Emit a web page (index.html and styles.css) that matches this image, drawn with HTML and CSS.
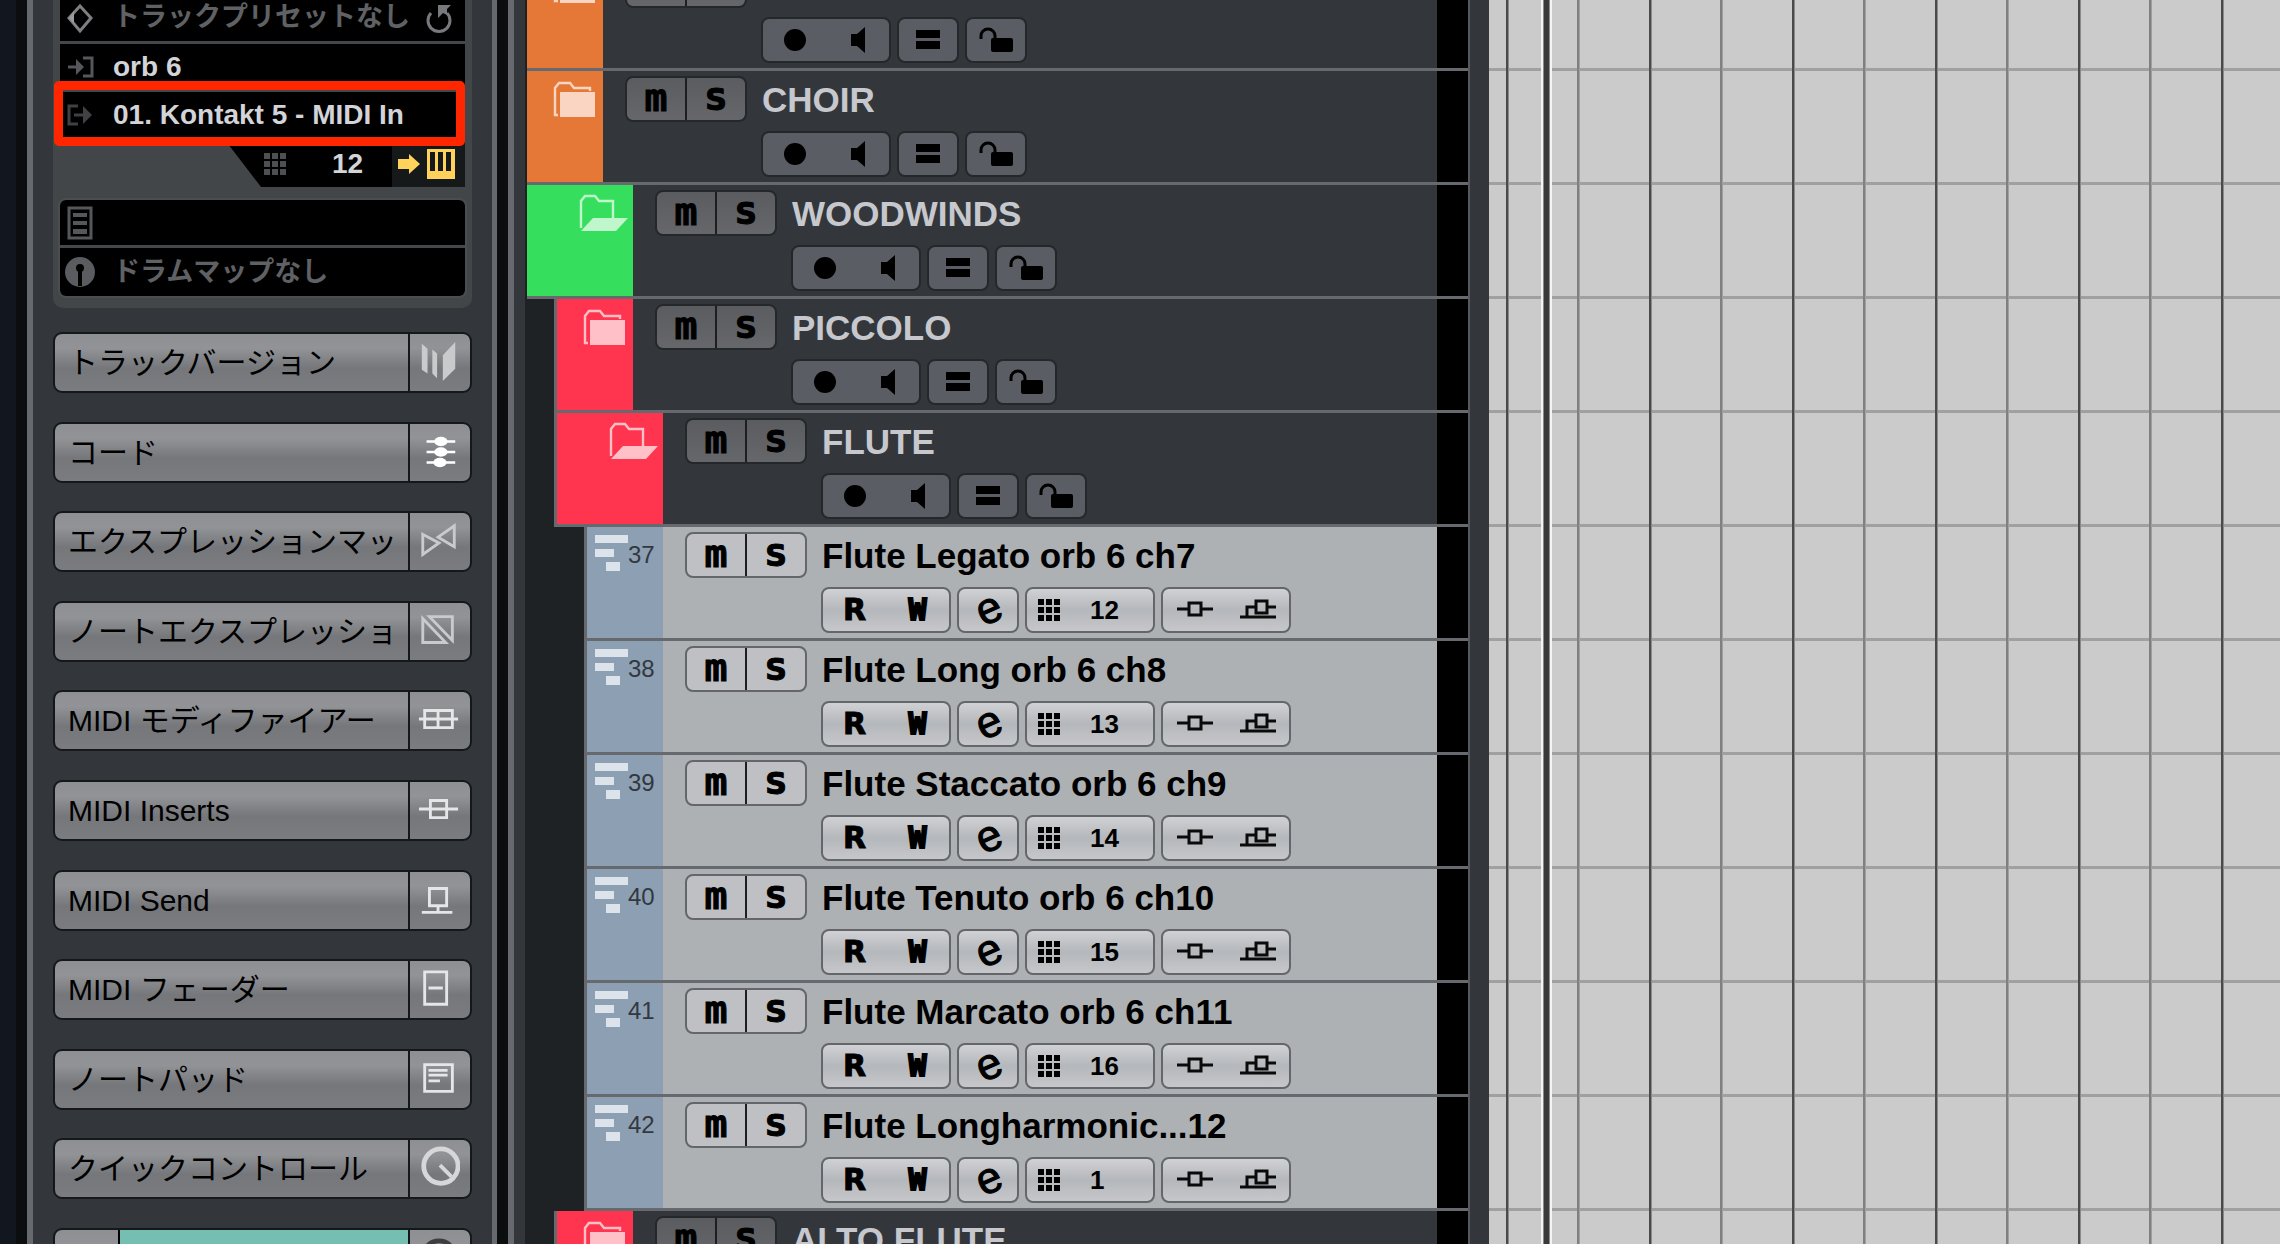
FILE: index.html
```html
<!DOCTYPE html>
<html lang="ja">
<head>
    <meta charset="UTF-8">
    <meta name="viewport" content="width=device-width, initial-scale=1.0">
    <title>Project</title>
    <link rel="stylesheet" href="styles.css">
</head>
<body>
    <!-- Shared icons -->
    <svg class="icon-defs" aria-hidden="true">
        <symbol id="i-folder" viewBox="0 0 43 36">
            <path d="M5 34H2V7l4-5h11l4 5h16v3" fill="none" stroke="currentColor" stroke-width="2.4"/>
            <path d="M7 11h35v25H7z" fill="currentColor"/>
        </symbol>
        <symbol id="i-open" viewBox="0 0 50 37">
            <path d="M3 34V7l4-5h10l4 5h14v17" fill="none" stroke="currentColor" stroke-width="2.4"/>
            <path d="M15 24h35L38 37H3z" fill="currentColor"/>
        </symbol>
        <symbol id="i-midi" viewBox="0 0 33 36">
            <path d="M0 0h33v8H0zM0 14h19v8H0zM11 27h14v9H11z" fill="currentColor"/>
        </symbol>
        <symbol id="i-rec" viewBox="0 0 36 26"><circle cx="18" cy="13" r="11"/></symbol>
        <symbol id="i-speaker" viewBox="0 0 36 26"><path d="M11 7h6l8-7v26l-8-7h-6z"/></symbol>
        <symbol id="i-equal" viewBox="0 0 36 26"><path d="M6 3h24v8H6zM6 14h24v8H6z"/></symbol>
        <symbol id="i-lock" viewBox="0 0 36 26">
            <path d="M3 12V9a7 7 0 0 1 14 0v4" fill="none" stroke="#000" stroke-width="3"/>
            <rect x="13" y="11" width="22" height="14" rx="2"/>
        </symbol>
        <symbol id="i-grid" viewBox="0 0 22 22">
            <path d="M0 0h6v6H0zM8 0h6v6H8zM16 0h6v6h-6zM0 8h6v6H0zM8 8h6v6H8zM16 8h6v6h-6zM0 16h6v6H0zM8 16h6v6H8zM16 16h6v6h-6z" fill="currentColor"/>
        </symbol>
        <symbol id="i-insert" viewBox="0 0 36 26">
            <path d="M0 12h12M24 12h12M12 6h12v12H12z" fill="none" stroke="#0a0a0a" stroke-width="3"/>
        </symbol>
        <symbol id="i-send" viewBox="0 0 36 26">
            <path d="M0 20h36M7 19v-9h9M28 10h8M16 4h11v12H16z" fill="none" stroke="#0a0a0a" stroke-width="3"/>
        </symbol>
    </svg>

    <div class="app">
        <div class="edge"></div>

        <aside class="inspector">
            <div class="routing">
                <div class="slots slots-top">
                    <div class="slot muted slot-preset">
                        <svg class="slot-icon" viewBox="0 0 30 34"><path d="M15 5l11 12-11 13L4 17z" fill="none" stroke="#7d7f82" stroke-width="3"/><path d="M4 17l5-7v12l6 8z" fill="#999b9d"/></svg>
                        <span>トラックプリセットなし</span>
                        <svg class="slot-reload" viewBox="0 0 30 34"><path d="M7 12a11 11 0 1 0 16 0" fill="none" stroke="#77797c" stroke-width="3"/><path d="M14 4h13l-4 4v6l-4-2-5 5z" fill="#77797c"/></svg>
                    </div>
                    <div class="slot">
                        <svg class="slot-icon" viewBox="0 0 30 34"><path d="M3 17h9M18 8h9v18h-9" fill="none" stroke="#55575a" stroke-width="3"/><path d="M11 9l8 8-8 8z" fill="#55575a"/></svg>
                        <span>orb 6</span>
                    </div>
                    <div class="slot">
                        <svg class="slot-icon" viewBox="0 0 30 34"><path d="M13 8H4v18h9M9 17h10" fill="none" stroke="#3f4143" stroke-width="3"/><path d="M18 8l9 9-9 9z" fill="#3f4143"/></svg>
                        <span>01. Kontakt 5 - MIDI In</span>
                        <div class="highlight"></div>
                    </div>
                </div>
                <div class="channel">
                    <svg class="channel-grid"><use href="#i-grid"/></svg>
                    <span class="channel-number">12</span>
                    <div class="channel-keys">
                        <svg viewBox="0 0 58 32"><path d="M0 11h11V6l11 10-11 10v-5H0z" fill="#ffd25c"/><path d="M29 1h28v30H29z" fill="#ffd25c"/><path d="M32 4h5v19h-5zM40 4h5v19h-5zM48 4h5v19h-5z" fill="#15191a"/></svg>
                    </div>
                </div>
                <div class="slots">
                    <div class="slot">
                        <svg class="slot-icon" viewBox="0 0 30 34"><path d="M4 2h22v30H4z" fill="none" stroke="#55575a" stroke-width="3"/><path d="M8 7h14v4H8zM8 15h14v4H8zM8 23h14v5H8z" fill="#55575a"/></svg>
                    </div>
                    <div class="slot muted">
                        <svg class="slot-icon" viewBox="0 0 30 34"><circle cx="15" cy="17" r="15" fill="#5a5c5f"/><circle cx="15" cy="13" r="4"/><path d="M13 14h4v17h-4z"/></svg>
                        <span>ドラムマップなし</span>
                    </div>
                </div>
            </div>

            <div class="sections">
                <button class="section"><span class="section-label">トラックバージョン</span>
                    <svg viewBox="0 0 44 44"><path d="M4 3l6 5v26l-6-4zM15 9l5 4v26l-5-5zM26 15L39 1v28L26 42z" fill="#c9cacc"/></svg></button>
                <button class="section"><span class="section-label">コード</span>
                    <svg viewBox="0 0 44 44"><path d="M9 11h30M9 22h30M9 33h30" stroke="#fff" stroke-width="2.5"/><ellipse cx="24" cy="11" rx="7" ry="5" fill="#fff"/><ellipse cx="24" cy="22" rx="7" ry="5" fill="#fff"/><ellipse cx="23" cy="33" rx="7" ry="5" fill="#fff"/></svg></button>
                <button class="section"><span class="section-label">エクスプレッションマッ</span>
                    <svg viewBox="0 0 44 44"><path d="M5 15v21l17-12zM38 6v22L21 18z" fill="none" stroke="#c9cacc" stroke-width="3"/></svg></button>
                <button class="section"><span class="section-label">ノートエクスプレッショ</span>
                    <svg viewBox="0 0 44 44"><path d="M5 9v25h24zM12 7h24v25z" fill="none" stroke="#c9cacc" stroke-width="3"/></svg></button>
                <button class="section"><span class="section-label">MIDI モディファイアー</span>
                    <svg viewBox="0 0 44 44"><path d="M1 21h41M7 12h29v18H7zM21 12v18" fill="none" stroke="#e6e6e8" stroke-width="3"/></svg></button>
                <button class="section"><span class="section-label">MIDI Inserts</span>
                    <svg viewBox="0 0 44 44"><path d="M1 21h41M13 12h17v18H13z" fill="none" stroke="#e6e6e8" stroke-width="3"/></svg></button>
                <button class="section"><span class="section-label">MIDI Send</span>
                    <svg viewBox="0 0 44 44"><path d="M4 35h32M12 10h18v18H12zM21 28v7" fill="none" stroke="#e6e6e8" stroke-width="3"/></svg></button>
                <button class="section"><span class="section-label">MIDI フェーダー</span>
                    <svg viewBox="0 0 44 44"><path d="M7 4h23v34H7zM11 21h15" fill="none" stroke="#e6e6e8" stroke-width="3"/></svg></button>
                <button class="section"><span class="section-label">ノートパッド</span>
                    <svg viewBox="0 0 44 44"><path d="M7 7h29v28H7zM11 13h20M11 18h20M11 24h12" fill="none" stroke="#e6e6e8" stroke-width="3"/></svg></button>
                <button class="section"><span class="section-label">クイックコントロール</span>
                    <svg viewBox="0 0 44 44"><circle cx="24" cy="20" r="18" fill="none" stroke="#d6d7d9" stroke-width="5"/><path d="M23 19l12 12" stroke="#d6d7d9" stroke-width="4"/></svg></button>
                <button class="section section-strip" aria-label="Channel"><span class="strip-pad"></span><span class="strip-color"><i></i></span>
                    <svg viewBox="0 0 44 44"><circle cx="22" cy="21" r="17" fill="none" stroke="#3c3e40" stroke-width="5"/></svg></button>
            </div>
        </aside>

        <div class="gutter"></div>

        <main class="tracks">
            <div class="track folder">
                <div class="track-color orange"><svg class="icon-folder"><use href="#i-folder"/></svg></div>
                <div class="track-body">
                    <div class="group ms"><button aria-label="Mute"></button><button aria-label="Solo"></button></div>
                    <div class="track-main">
                        <div class="track-name"></div>
                        <div class="controls">
                            <div class="group wide"><button aria-label="Record"><svg><use href="#i-rec"/></svg></button><button aria-label="Monitor"><svg><use href="#i-speaker"/></svg></button></div>
                            <div class="group"><button aria-label="Group"><svg><use href="#i-equal"/></svg></button></div>
                            <div class="group"><button aria-label="Lock"><svg><use href="#i-lock"/></svg></button></div>
                        </div>
                    </div>
                </div>
                <div class="meter"></div>
            </div>

            <div class="track folder">
                <div class="track-color orange"><svg class="icon-folder"><use href="#i-folder"/></svg></div>
                <div class="track-body">
                    <div class="group ms"><button class="lower">m</button><button>S</button></div>
                    <div class="track-main">
                        <div class="track-name">CHOIR</div>
                        <div class="controls">
                            <div class="group wide"><button aria-label="Record"><svg><use href="#i-rec"/></svg></button><button aria-label="Monitor"><svg><use href="#i-speaker"/></svg></button></div>
                            <div class="group"><button aria-label="Group"><svg><use href="#i-equal"/></svg></button></div>
                            <div class="group"><button aria-label="Lock"><svg><use href="#i-lock"/></svg></button></div>
                        </div>
                    </div>
                </div>
                <div class="meter"></div>
            </div>

            <div class="track folder">
                <div class="track-color open green"><svg class="icon-open"><use href="#i-open"/></svg></div>
                <div class="track-body">
                    <div class="group ms"><button class="lower">m</button><button>S</button></div>
                    <div class="track-main">
                        <div class="track-name">WOODWINDS</div>
                        <div class="controls">
                            <div class="group wide"><button aria-label="Record"><svg><use href="#i-rec"/></svg></button><button aria-label="Monitor"><svg><use href="#i-speaker"/></svg></button></div>
                            <div class="group"><button aria-label="Group"><svg><use href="#i-equal"/></svg></button></div>
                            <div class="group"><button aria-label="Lock"><svg><use href="#i-lock"/></svg></button></div>
                        </div>
                    </div>
                </div>
                <div class="meter"></div>
            </div>

            <div class="track folder depth-1">
                <div class="track-color red"><svg class="icon-folder"><use href="#i-folder"/></svg></div>
                <div class="track-body">
                    <div class="group ms"><button class="lower">m</button><button>S</button></div>
                    <div class="track-main">
                        <div class="track-name">PICCOLO</div>
                        <div class="controls">
                            <div class="group wide"><button aria-label="Record"><svg><use href="#i-rec"/></svg></button><button aria-label="Monitor"><svg><use href="#i-speaker"/></svg></button></div>
                            <div class="group"><button aria-label="Group"><svg><use href="#i-equal"/></svg></button></div>
                            <div class="group"><button aria-label="Lock"><svg><use href="#i-lock"/></svg></button></div>
                        </div>
                    </div>
                </div>
                <div class="meter"></div>
            </div>

            <div class="track folder depth-1">
                <div class="track-color open red"><svg class="icon-open"><use href="#i-open"/></svg></div>
                <div class="track-body">
                    <div class="group ms"><button class="lower">m</button><button>S</button></div>
                    <div class="track-main">
                        <div class="track-name">FLUTE</div>
                        <div class="controls">
                            <div class="group wide"><button aria-label="Record"><svg><use href="#i-rec"/></svg></button><button aria-label="Monitor"><svg><use href="#i-speaker"/></svg></button></div>
                            <div class="group"><button aria-label="Group"><svg><use href="#i-equal"/></svg></button></div>
                            <div class="group"><button aria-label="Lock"><svg><use href="#i-lock"/></svg></button></div>
                        </div>
                    </div>
                </div>
                <div class="meter"></div>
            </div>

            <div class="track midi depth-2">
                <div class="track-color blue"><svg class="icon-midi"><use href="#i-midi"/></svg><span>37</span></div>
                <div class="track-body">
                    <div class="group ms"><button class="lower">m</button><button>S</button></div>
                    <div class="track-main">
                        <div class="track-name">Flute Legato orb 6 ch7</div>
                        <div class="controls">
                            <div class="group wide"><button>R</button><button class="write">W</button></div>
                            <div class="group"><button class="edit"><span>e</span></button></div>
                            <div class="group wide"><button class="number"><svg><use href="#i-grid"/></svg>12</button></div>
                            <div class="group wide"><button aria-label="Inserts"><svg><use href="#i-insert"/></svg></button><button aria-label="Sends"><svg><use href="#i-send"/></svg></button></div>
                        </div>
                    </div>
                </div>
                <div class="meter"></div>
            </div>

            <div class="track midi depth-2">
                <div class="track-color blue"><svg class="icon-midi"><use href="#i-midi"/></svg><span>38</span></div>
                <div class="track-body">
                    <div class="group ms"><button class="lower">m</button><button>S</button></div>
                    <div class="track-main">
                        <div class="track-name">Flute Long orb 6 ch8</div>
                        <div class="controls">
                            <div class="group wide"><button>R</button><button class="write">W</button></div>
                            <div class="group"><button class="edit"><span>e</span></button></div>
                            <div class="group wide"><button class="number"><svg><use href="#i-grid"/></svg>13</button></div>
                            <div class="group wide"><button aria-label="Inserts"><svg><use href="#i-insert"/></svg></button><button aria-label="Sends"><svg><use href="#i-send"/></svg></button></div>
                        </div>
                    </div>
                </div>
                <div class="meter"></div>
            </div>

            <div class="track midi depth-2">
                <div class="track-color blue"><svg class="icon-midi"><use href="#i-midi"/></svg><span>39</span></div>
                <div class="track-body">
                    <div class="group ms"><button class="lower">m</button><button>S</button></div>
                    <div class="track-main">
                        <div class="track-name">Flute Staccato orb 6 ch9</div>
                        <div class="controls">
                            <div class="group wide"><button>R</button><button class="write">W</button></div>
                            <div class="group"><button class="edit"><span>e</span></button></div>
                            <div class="group wide"><button class="number"><svg><use href="#i-grid"/></svg>14</button></div>
                            <div class="group wide"><button aria-label="Inserts"><svg><use href="#i-insert"/></svg></button><button aria-label="Sends"><svg><use href="#i-send"/></svg></button></div>
                        </div>
                    </div>
                </div>
                <div class="meter"></div>
            </div>

            <div class="track midi depth-2">
                <div class="track-color blue"><svg class="icon-midi"><use href="#i-midi"/></svg><span>40</span></div>
                <div class="track-body">
                    <div class="group ms"><button class="lower">m</button><button>S</button></div>
                    <div class="track-main">
                        <div class="track-name">Flute Tenuto orb 6 ch10</div>
                        <div class="controls">
                            <div class="group wide"><button>R</button><button class="write">W</button></div>
                            <div class="group"><button class="edit"><span>e</span></button></div>
                            <div class="group wide"><button class="number"><svg><use href="#i-grid"/></svg>15</button></div>
                            <div class="group wide"><button aria-label="Inserts"><svg><use href="#i-insert"/></svg></button><button aria-label="Sends"><svg><use href="#i-send"/></svg></button></div>
                        </div>
                    </div>
                </div>
                <div class="meter"></div>
            </div>

            <div class="track midi depth-2">
                <div class="track-color blue"><svg class="icon-midi"><use href="#i-midi"/></svg><span>41</span></div>
                <div class="track-body">
                    <div class="group ms"><button class="lower">m</button><button>S</button></div>
                    <div class="track-main">
                        <div class="track-name">Flute Marcato orb 6 ch11</div>
                        <div class="controls">
                            <div class="group wide"><button>R</button><button class="write">W</button></div>
                            <div class="group"><button class="edit"><span>e</span></button></div>
                            <div class="group wide"><button class="number"><svg><use href="#i-grid"/></svg>16</button></div>
                            <div class="group wide"><button aria-label="Inserts"><svg><use href="#i-insert"/></svg></button><button aria-label="Sends"><svg><use href="#i-send"/></svg></button></div>
                        </div>
                    </div>
                </div>
                <div class="meter"></div>
            </div>

            <div class="track midi depth-2">
                <div class="track-color blue"><svg class="icon-midi"><use href="#i-midi"/></svg><span>42</span></div>
                <div class="track-body">
                    <div class="group ms"><button class="lower">m</button><button>S</button></div>
                    <div class="track-main">
                        <div class="track-name">Flute Longharmonic...12</div>
                        <div class="controls">
                            <div class="group wide"><button>R</button><button class="write">W</button></div>
                            <div class="group"><button class="edit"><span>e</span></button></div>
                            <div class="group wide"><button class="number"><svg><use href="#i-grid"/></svg>1</button></div>
                            <div class="group wide"><button aria-label="Inserts"><svg><use href="#i-insert"/></svg></button><button aria-label="Sends"><svg><use href="#i-send"/></svg></button></div>
                        </div>
                    </div>
                </div>
                <div class="meter"></div>
            </div>

            <div class="track folder depth-1">
                <div class="track-color red"><svg class="icon-folder"><use href="#i-folder"/></svg></div>
                <div class="track-body">
                    <div class="group ms"><button class="lower">m</button><button>S</button></div>
                    <div class="track-main">
                        <div class="track-name">ALTO FLUTE</div>
                    </div>
                </div>
                <div class="meter"></div>
            </div>
        </main>

        <div class="splitter"></div>

        <div class="timeline">
            <div class="bars"></div>
            <div class="playhead"></div>
        </div>
    </div>
</body>
</html>
```

FILE: styles.css
```css
* {
    box-sizing: border-box;
}
body {
    margin: 0;
    background: #33373b;
    font-family: "Liberation Sans", "Noto Sans CJK JP", sans-serif;
    overflow: hidden;
}
button {
    margin: 0;
    padding: 0;
    border: none;
    background: none;
    color: #000;
    font-family: inherit;
    cursor: pointer;
}
.icon-defs {
    display: none;
}
.app {
    display: flex;
    height: 100vh;
    overflow: hidden;
}

/* Window edge and panel borders */
.edge {
    flex: 0 0 33px;
    background: linear-gradient(to right, #12161f 16px, #0c0d0f 16px, #0c0d0f 27px, #66696e 27px);
}
.gutter {
    flex: 0 0 35px;
    background: linear-gradient(to right, #66696e 5px, #0c0d0f 5px, #0c0d0f 16px, #66696e 16px, #66696e 22px, #33373b 22px, #33373b 33px, #1e2225 33px);
}

/* Inspector */
.inspector {
    flex: 0 0 459px;
    min-width: 0;
    padding: 0 20px;
    background: #33373b;
}
.routing {
    padding: 0 7px 12px 7px;
    background: #424648;
    border-radius: 0 0 10px 10px;
}
.slots {
    background: #000;
    border-radius: 6px;
    box-shadow: 0 0 0 2px #4b4e51;
}
.slots-top {
    border-radius: 0;
    box-shadow: none;
}
.slot {
    position: relative;
    display: flex;
    align-items: center;
    height: 48px;
    padding-left: 5px;
    border-bottom: 3px solid #45484b;
    color: #d3d4d8;
    font-size: 28px;
    font-weight: bold;
    line-height: 45px;
    white-space: nowrap;
}
.slot:last-child {
    border-bottom: none;
}
.slots-top .slot:last-child {
    padding-bottom: 3px;
}
.slot-preset {
    height: 44px;
    padding-bottom: 6px;
}
.muted {
    color: #5f6164;
    font-size: 27px;
}
.slot-icon {
    flex: 0 0 30px;
    height: 34px;
    margin-right: 18px;
}
.slot-reload {
    flex: 0 0 30px;
    height: 34px;
    margin: 0 11px 0 auto;
}
.highlight {
    position: absolute;
    z-index: 1;
    top: -11px;
    left: -6px;
    right: 0;
    height: 65px;
    border: 9px solid #ff2600;
    border-radius: 5px;
}
.channel {
    display: flex;
    align-items: center;
    height: 47px;
    margin-bottom: 13px;
    background: #000;
    clip-path: polygon(165px 0, 100% 0, 100% 100%, 201px 100%);
    color: #d3d4d8;
    font-size: 28px;
    font-weight: bold;
}
.channel-grid {
    width: 22px;
    height: 22px;
    margin-left: 204px;
    color: #4d4f52;
}
.channel-number {
    margin-left: 46px;
}
.channel-keys {
    display: flex;
    align-items: center;
    height: 47px;
    margin-left: auto;
    padding: 0 9px 0 6px;
    background: #15191a;
}
.channel-keys svg {
    width: 58px;
    height: 32px;
}

/* Inspector sections, spread evenly down the panel */
.sections {
    display: flex;
    flex-direction: column;
    justify-content: space-between;
    height: 957px;
    margin-top: 24px;
}
.section {
    display: flex;
    align-items: center;
    height: 61px;
    border: 2px solid #15181a;
    border-radius: 9px;
    background: linear-gradient(#8e8f92, #929396 25%, #76777b 60%, #7b7c80);
    overflow: hidden;
    text-align: left;
}
.section-label {
    flex: 1;
    padding-left: 13px;
    font-size: 30px;
    line-height: 57px;
    white-space: nowrap;
}
.section svg {
    flex: 0 0 62px;
    height: 57px;
    padding: 6px 10px 7px 8px;
    border-left: 2px solid #15181a;
}
.strip-pad {
    flex: 0 0 63px;
}
.strip-color {
    flex: 1;
    align-self: stretch;
    padding: 14px 34px;
    border-left: 2px solid #000;
    background: #74bfb2;
}
.strip-color i {
    display: block;
    width: 27px;
    height: 3px;
    margin-left: auto;
    background: #fff;
}

/* Track list, scrolled partway into its first row */
.tracks {
    flex: 0 0 941px;
    margin-top: -43px;
    background: #1e2225;
}
.track {
    display: flex;
    height: 114px;
    border-bottom: 3px solid #66696e;
}
.depth-1 {
    margin-left: 27px;
    border-left: 3px solid #66696e;
}
.depth-2 {
    margin-left: 57px;
    border-left: 3px solid #66696e;
}
.track-color {
    display: flex;
    flex: 0 0 76px;
    justify-content: flex-end;
    padding: 10px 7px 0 0;
}
.track-color.open {
    flex-basis: 106px;
    padding: 9px 5px 0 0;
}
.orange {
    background: #e57837;
    color: #f9d5c2;
}
.green {
    background: #35df5d;
    color: #c0f6cc;
}
.red {
    background: #ff344e;
    color: #ffc0c8;
}
.track-color.blue {
    justify-content: flex-start;
    padding: 8px 0 0 8px;
    background: #8d9fb3;
    color: #dde3ea;
}
.blue span {
    color: #33383e;
    font-size: 24px;
    line-height: 40px;
}
.icon-folder {
    width: 43px;
    height: 36px;
}
.icon-open {
    width: 50px;
    height: 37px;
}
.icon-midi {
    width: 33px;
    height: 36px;
}
.track-body {
    display: flex;
    flex: 1;
    align-items: flex-start;
    gap: 14px;
    padding: 5px 0 0 22px;
    background: #33373b;
}
.midi .track-body {
    background: #adb1b4;
}
.track-name {
    height: 46px;
    padding-left: 1px;
    color: #c6c8cd;
    font-size: 35px;
    font-weight: bold;
    line-height: 48px;
    white-space: nowrap;
}
.midi .track-name {
    color: #000;
}
.meter {
    flex: 0 0 31px;
    background: #000;
}
.controls {
    display: flex;
    gap: 6px;
    margin-top: 9px;
}

/* Button groups */
.group {
    display: flex;
    width: 62px;
    height: 46px;
    border: 2px solid #25282b;
    border-radius: 8px;
    background: #5a5d63;
}
.wide {
    width: 130px;
}
.ms {
    width: 122px;
    background: linear-gradient(#5a5c60, #65676b);
}
.midi .group {
    border-color: #64666a;
    background: linear-gradient(#d0d1d4, #b4b7bb 50%, #c6c7ca);
}
.midi .ms {
    background: #bfc0c4;
}
.group button {
    display: flex;
    flex: 1;
    align-items: center;
    justify-content: center;
    font-family: "DejaVu Sans", sans-serif;
    font-size: 30px;
    font-weight: bold;
    line-height: 42px;
    -webkit-text-stroke: 1px #000;
}
.group svg {
    width: 36px;
    height: 26px;
}
.ms button {
    padding-top: 2px;
}
.ms button + button {
    border-left: 2px solid #1c1e20;
}
.group .lower {
    padding: 0 0 3px;
    font-family: "DejaVu Sans Mono", monospace;
    font-size: 38px;
}
.group .write {
    font-family: "DejaVu Sans Mono", monospace;
    -webkit-text-stroke: 2px #000;
}
.group .edit {
    padding-bottom: 5px;
    font-family: "Liberation Sans", sans-serif;
    font-size: 44px;
    font-weight: normal;
}
.edit span {
    transform: rotate(-24deg);
}
.group .number {
    justify-content: flex-start;
    gap: 30px;
    padding-left: 11px;
    font-family: "Liberation Sans", sans-serif;
    font-size: 26px;
    -webkit-text-stroke: 0;
}
.number svg {
    width: 22px;
    height: 22px;
}

/* Timeline */
.splitter {
    flex: 0 0 21px;
    background: #33373b;
    border-left: 2px solid #55585c;
}
.timeline {
    position: relative;
    flex: 1;
    background: #cbcbcb;
}
.bars {
    height: 100%;
    background:
        repeating-linear-gradient(to right, transparent 0, transparent 17px, #4a4a4a 17px, #4a4a4a 19px, #8a8a8a 19px, #8a8a8a 20px, transparent 20px, transparent 88px, #808080 88px, #808080 90px, #a0a0a0 90px, #a0a0a0 91px, transparent 91px, transparent 143px),
        repeating-linear-gradient(to bottom, transparent 0, transparent 68px, #a0a0a0 68px, #a0a0a0 71px, transparent 71px, transparent 114px);
}
.playhead {
    position: absolute;
    top: 0;
    bottom: 0;
    left: 52px;
    width: 11px;
    border-left: 2px solid #f4f4f4;
    border-right: 2px solid #f4f4f4;
    background: linear-gradient(to right, #8a8a8a 1px, #3a3a3a 1px, #3a3a3a 6px, #8a8a8a 6px);
}
```
